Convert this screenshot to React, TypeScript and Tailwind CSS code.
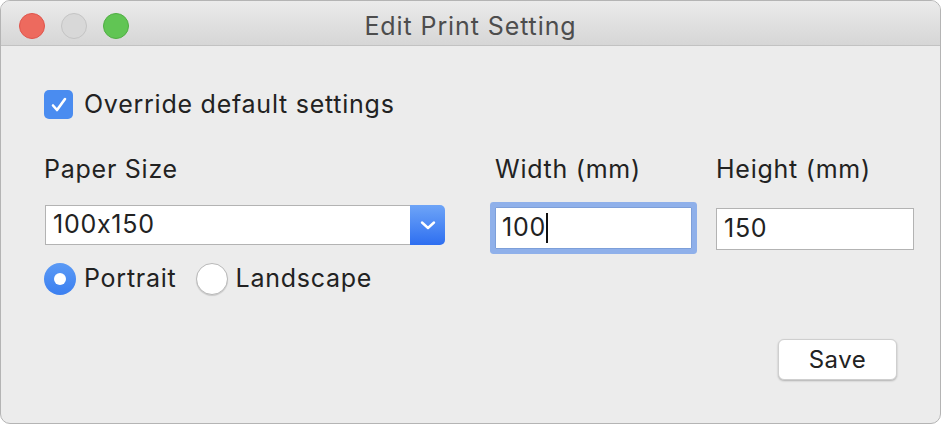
import { useState } from 'react'

const font = { fontFamily: 'Inter, "Noto Sans", "Liberation Sans", sans-serif' }

function TrafficLights() {
  return (
    <div className="absolute left-[18px] top-[12px] flex gap-[16px]">
      <span className="h-[26px] w-[26px] rounded-full border border-[#e0544b] bg-[#ed6a5e]" />
      <span className="h-[26px] w-[26px] rounded-full border border-[#c4c4c4] bg-[#d8d8d8]" />
      <span className="h-[26px] w-[26px] rounded-full border border-[#4fae42] bg-[#61c554]" />
    </div>
  )
}

function Radio({ checked, label }: { checked: boolean; label: string }) {
  return (
    <label className="flex h-[32px] items-center gap-[8px]">
      {checked ? (
        <span className="flex h-[32px] w-[32px] items-center justify-center rounded-full bg-gradient-to-b from-[#5b9af5] to-[#3b7ff0]">
          <span className="h-[12px] w-[12px] rounded-full bg-white" />
        </span>
      ) : (
        <span className="h-[32px] w-[32px] rounded-full border border-[#b9b9b9] bg-white shadow-[0_1px_1px_rgba(0,0,0,0.15)]" />
      )}
      <span>{label}</span>
    </label>
  )
}

export default function App() {
  const [override] = useState(true)

  return (
    <div className="h-[425px] w-[942px] bg-white text-[#222] [font-feature-settings:'calt'_0]" style={font}>
      <div className="flex h-[424px] w-[941px] flex-col overflow-hidden rounded-[10px] border border-[#b4b4b4] bg-[#ececec]">
        {/* title bar */}
        <div className="relative flex h-[45px] shrink-0 items-center justify-center border-b border-[#c2c2c2] bg-gradient-to-b from-[#ebebeb] to-[#d6d6d6] pt-[6px]">
          <TrafficLights />
          <span className="text-[25px] leading-[30px] tracking-[0.9px] text-[#4d4d4d]">Edit Print Setting</span>
        </div>

        <div className="flex flex-1 flex-col pl-[43px] pr-[24px] text-[25px] tracking-[0.75px]">
          <div className="mt-[44px] flex h-[29px] items-center gap-[11px] leading-[29px]">
            <span className="flex h-[29px] w-[29px] items-center justify-center rounded-[5px] bg-[#4a8cf0]">
              <svg width="20" height="20" viewBox="0 0 20 20" fill="none">
                <path d="M4 10.5l4 4.5 8-11" stroke="white" strokeWidth="2.6" strokeLinecap="round" strokeLinejoin="round" />
              </svg>
            </span>
            <span>{override && 'Override default settings'}</span>
          </div>

          <div className="mt-[28px] flex">
            <div className="flex w-[401px] shrink-0 flex-col">
              <span className="h-[45px] leading-[45px]">Paper Size</span>
              <div className="mt-[13px] flex h-[40px] pl-px">
                <div className="flex flex-1 items-center border border-r-0 border-[#b3b3b3] bg-white pl-[7px]">100x150</div>
                <div className="flex w-[35px] items-center justify-center rounded-r-[5px] bg-gradient-to-b from-[#6ea4f7] to-[#2e6ef0]">
                  <svg width="18" height="12" viewBox="0 0 18 12" fill="none">
                    <path d="M3 3.5l6 5.5 6-5.5" stroke="white" strokeWidth="2.4" strokeLinecap="round" strokeLinejoin="round" />
                  </svg>
                </div>
              </div>
              <div className="mt-[18px] flex items-center gap-[19px]">
                <Radio checked label="Portrait" />
                <Radio checked={false} label="Landscape" />
              </div>
            </div>

            <div className="ml-[50px] flex w-[197px] shrink-0 flex-col">
              <span className="h-[45px] leading-[45px]">Width (mm)</span>
              <div className="mt-[15px] flex h-[42px] items-center rounded-[1px] border border-[#7d9fd9] bg-white pl-[6px] shadow-[0_0_0_5px_#8fb0ea]">
                <span>100</span>
                <span className="h-[30px] w-[2px] bg-[#111]" />
              </div>
            </div>

            <div className="ml-[24px] flex w-[198px] shrink-0 flex-col">
              <span className="h-[45px] leading-[45px]">Height (mm)</span>
              <div className="mt-[16px] flex h-[42px] items-center border border-[#b3b3b3] bg-white pl-[7px]">150</div>
            </div>
          </div>

          <div className="mt-[44px] flex justify-end pr-[19px]">
            <button className="h-[41px] w-[119px] rounded-[6px] border border-[#cfcfcf] bg-white text-[24px] tracking-[0.5px] shadow-[0_1px_2px_rgba(0,0,0,0.25)]">
              Save
            </button>
          </div>
        </div>
      </div>
    </div>
  )
}
